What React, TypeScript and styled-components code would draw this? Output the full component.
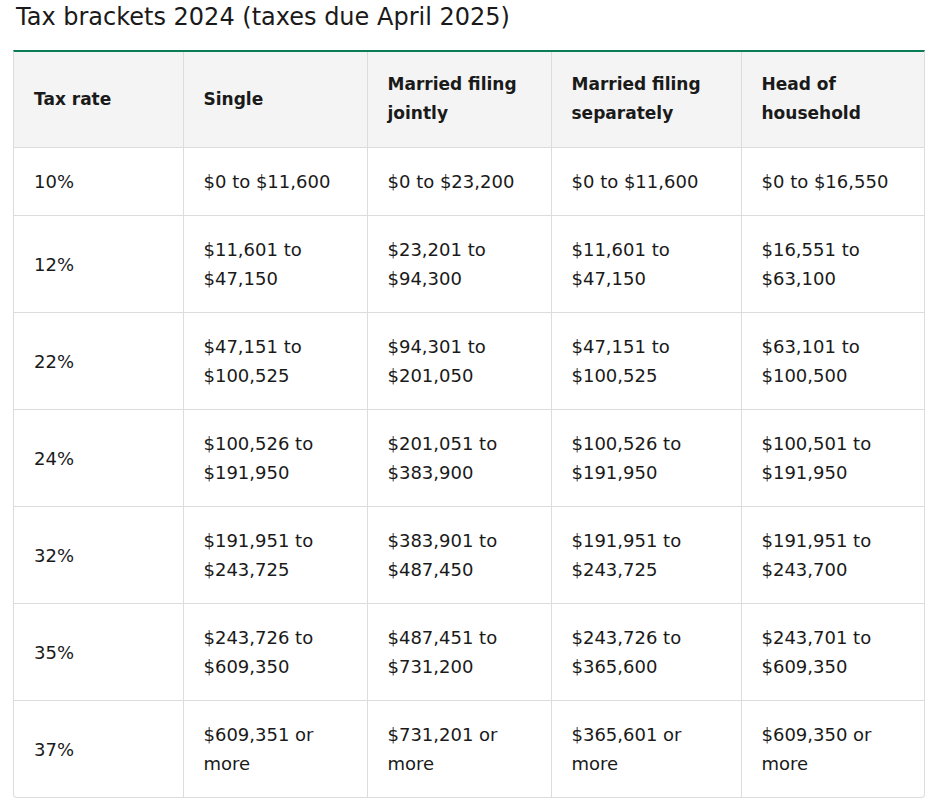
import styled, { createGlobalStyle } from "styled-components";

const GlobalStyle = createGlobalStyle`
  body {
    margin: 0;
    background: #ffffff;
    font-family: "DejaVu Sans", "Liberation Sans", sans-serif;
    color: #1b1b1b;
  }
`;

type Row = { rate: string; cells: string[] };

const HEADERS = [
  "Tax rate",
  "Single",
  "Married filing jointly",
  "Married filing separately",
  "Head of household",
];

const COL_WIDTHS = [169, 184, 184, 190, 184];

const ROWS: Row[] = [
  { rate: "10%", cells: ["$0 to $11,600", "$0 to $23,200", "$0 to $11,600", "$0 to $16,550"] },
  { rate: "12%", cells: ["$11,601 to $47,150", "$23,201 to $94,300", "$11,601 to $47,150", "$16,551 to $63,100"] },
  { rate: "22%", cells: ["$47,151 to $100,525", "$94,301 to $201,050", "$47,151 to $100,525", "$63,101 to $100,500"] },
  { rate: "24%", cells: ["$100,526 to $191,950", "$201,051 to $383,900", "$100,526 to $191,950", "$100,501 to $191,950"] },
  { rate: "32%", cells: ["$191,951 to $243,725", "$383,901 to $487,450", "$191,951 to $243,725", "$191,951 to $243,700"] },
  { rate: "35%", cells: ["$243,726 to $609,350", "$487,451 to $731,200", "$243,726 to $365,600", "$243,701 to $609,350"] },
  { rate: "37%", cells: ["$609,351 or more", "$731,201 or more", "$365,601 or more", "$609,350 or more"] },
];

const App = () => {
  return (
    <Page>
      <GlobalStyle />
      <Title>Tax brackets 2024 (taxes due April 2025)</Title>
      <TableWrap>
        <Table>
          <colgroup>
            {COL_WIDTHS.map((w, i) => (
              <col key={i} style={{ width: w }} />
            ))}
          </colgroup>
          <thead>
            <tr>
              {HEADERS.map((h) => (
                <HeadCell key={h}>{h}</HeadCell>
              ))}
            </tr>
          </thead>
          <tbody>
            {ROWS.map((row) => (
              <tr key={row.rate}>
                <Cell>{row.rate}</Cell>
                {row.cells.map((c, i) => (
                  <Cell key={i}>{c}</Cell>
                ))}
              </tr>
            ))}
          </tbody>
        </Table>
      </TableWrap>
    </Page>
  );
};
export default App;

const Page = styled.div`
  padding: 0 5px 4px 13px;
  width: 912px;
`;

const Title = styled.h2`
  margin: 0;
  padding: 2px 0 0 3px;
  height: 50px;
  box-sizing: border-box;
  font-size: 24px;
  font-weight: 400;
  line-height: 30px;
  color: #1a1a1a;
`;

const TableWrap = styled.div`
  border-top: 2px solid #0a7d55;
  border-left: 1px solid #dcdcdc;
  border-right: 1px solid #dcdcdc;
  border-bottom: 1px solid #dcdcdc;
  border-radius: 0 0 4px 4px;
  overflow: hidden;
`;

const Table = styled.table`
  width: 100%;
  border-collapse: collapse;
  table-layout: fixed;
`;

const HeadCell = styled.th`
  background-color: #f4f4f4;
  text-align: left;
  vertical-align: middle;
  padding: 18px 20px 19px;
  font-size: 17px;
  font-weight: 700;
  line-height: 29px;
  color: #1a1a1a;
  border-left: 1px solid #dcdcdc;
  border-bottom: 1px solid #dcdcdc;
  &:first-child {
    border-left: none;
  }
`;

const Cell = styled.td`
  vertical-align: middle;
  padding: 19px 20px;
  font-size: 18px;
  line-height: 29px;
  color: #1a1a1a;
  border-left: 1px solid #dcdcdc;
  border-top: 1px solid #dcdcdc;
  &:first-child {
    border-left: none;
  }
  tr:first-child > & {
    border-top: none;
  }
`;
